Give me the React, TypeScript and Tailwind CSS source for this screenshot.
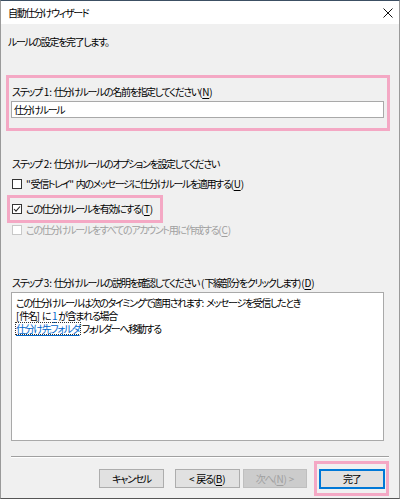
import React from "react";

const U = ({ children }: { children: React.ReactNode }) => <span className="underline underline-offset-2">{children}</span>;
const L = ({ children }: { children: React.ReactNode }) => <span className="tracking-[-0.2px] whitespace-pre">{children}</span>;

const Check = ({ checked, disabled }: { checked?: boolean; disabled?: boolean }) => (
  <span
    className={`inline-flex w-[10px] h-[10px] shrink-0 items-center justify-center border bg-white ${
      disabled ? "border-[#c8c8c8]" : "border-[#333333]"
    }`}
  >
    {checked && (
      <svg width="8" height="8" viewBox="0 0 8 8">
        <path d="M1 4 L3 6.2 L7 1.5" fill="none" stroke="#222" strokeWidth="1.1" />
      </svg>
    )}
  </span>
);

export default function App() {
  return (
    <div className="w-[400px] h-[499px] flex flex-col bg-[#f0f0f0] border-x border-b border-x-[#9a9a9a] border-b-[#555] border-t border-t-[#3c4f63] text-[10px] leading-[14px] tracking-[-1.35px] text-black overflow-hidden whitespace-nowrap [font-feature-settings:'palt'] font-['Noto_Sans_CJK_JP','Noto_Sans',sans-serif]">
      {/* title bar */}
      <div className="h-[23px] bg-white flex items-center justify-between pl-[7px] pr-[6px] shrink-0">
        <span>自動仕分けウィザード</span>
        <svg width="10" height="10" viewBox="0 0 10 10">
          <path d="M0.5 0.5 L9.5 9.5 M9.5 0.5 L0.5 9.5" stroke="#111" strokeWidth="1" />
        </svg>
      </div>

      <div className="flex flex-col pl-[5px] pr-[10px]">
        <div className="mt-[11px] pl-[2px]">ルールの設定を完了します。</div>

        {/* Step 1 */}
        <div className="mt-[26px] w-[384px] h-[56px] border-[3px] border-[#f4a8c4] pt-[7px] pl-[2px] pr-[2px]">
          <div className="pl-[1px]">
            ステップ<L> 1: </L>仕分けルールの名前を指定してください<L>(<U>N</U>)</L>
          </div>
          <div className="mt-[2px] w-[373px] h-[17px] bg-white border border-[#a9a9a9] flex items-center pl-[2px]">
            仕分けルール
          </div>
        </div>

        {/* Step 2 */}
        <div className="mt-[26px] pl-[6px]">
          ステップ<L> 2: </L>仕分けルールのオプションを設定してください
        </div>
        <div className="mt-[6px] pl-[6px] flex items-center gap-[4px]">
          <Check />
          <span>
            <L>"</L>受信トレイ<L>" </L>内のメッセージに仕分けルールを適用する<L>(<U>U</U>)</L>
          </span>
        </div>
        <div className="mt-[4px] ml-[1px] w-[156px] h-[28px] border-[3px] border-[#f4a8c4] pl-[2px] flex items-center gap-[4px]">
          <Check checked />
          <span>
            この仕分けルールを有効にする<L>(<U>T</U>)</L>
          </span>
        </div>
        <div className="pl-[6px] flex items-center gap-[4px] text-[#a0a0a0]">
          <Check disabled />
          <span>
            この仕分けルールをすべてのアカウント用に作成する<L>(<U>C</U>)</L>
          </span>
        </div>

        {/* Step 3 */}
        <div className="mt-[39px] pl-[6px]">
          ステップ<L> 3: </L>仕分けルールの説明を確認してください<L> (</L>下線部分をクリックします<L>)(<U>D</U>)</L>
        </div>
        <div className="mt-[2px] ml-[5px] w-[373px] h-[149px] bg-white border border-[#a9a9a9] pl-[4px] pt-[3px] leading-[13px]">
          <div>
            この仕分けルールは次のタイミングで適用されます<L>: </L>メッセージを受信したとき
          </div>
          <div>
            <L>[</L>件名<L>] </L>に<L> </L>
            <span className="text-[#0066cc] underline underline-offset-2">1</span>
            <L> </L>が含まれる場合
          </div>
          <div className="flex items-center">
            <span className="text-[#0066cc] underline underline-offset-2 outline outline-1 outline-dotted outline-[#333] leading-[11px]">
              仕分け先フォルダ
            </span>
            <span className="ml-[2px]">フォルダーへ移動する</span>
          </div>
        </div>

        {/* separator */}
        <div className="mt-[15px] ml-[5px] w-[378px] h-[2px] border-t border-t-[#a0a0a0] border-b border-b-white" />

        {/* buttons */}
        <div className="mt-[3px] flex items-center">
          <button className="ml-[93px] w-[66px] h-[19px] bg-[#e1e1e1] border border-[#adadad] flex items-center justify-center">
            キャンセル
          </button>
          <button className="ml-[11px] w-[66px] h-[19px] bg-[#e1e1e1] border border-[#adadad] flex items-center justify-center">
            <L>&lt; </L>戻る<L>(<U>B</U>)</L>
          </button>
          <button className="ml-[3px] w-[66px] h-[19px] bg-[#cccccc] border border-[#bfbfbf] text-[#a0a0a0] flex items-center justify-center">
            次へ<L>(<U>N</U>) &gt;</L>
          </button>
          <div className="ml-[7px] w-[76px] h-[35px] border-[3px] border-[#f4a8c4] flex items-center justify-center">
            <button className="w-[66px] h-[20px] bg-[#e1e1e1] border-2 border-[#0078d7] flex items-center justify-center">
              完了
            </button>
          </div>
        </div>
      </div>
    </div>
  );
}
